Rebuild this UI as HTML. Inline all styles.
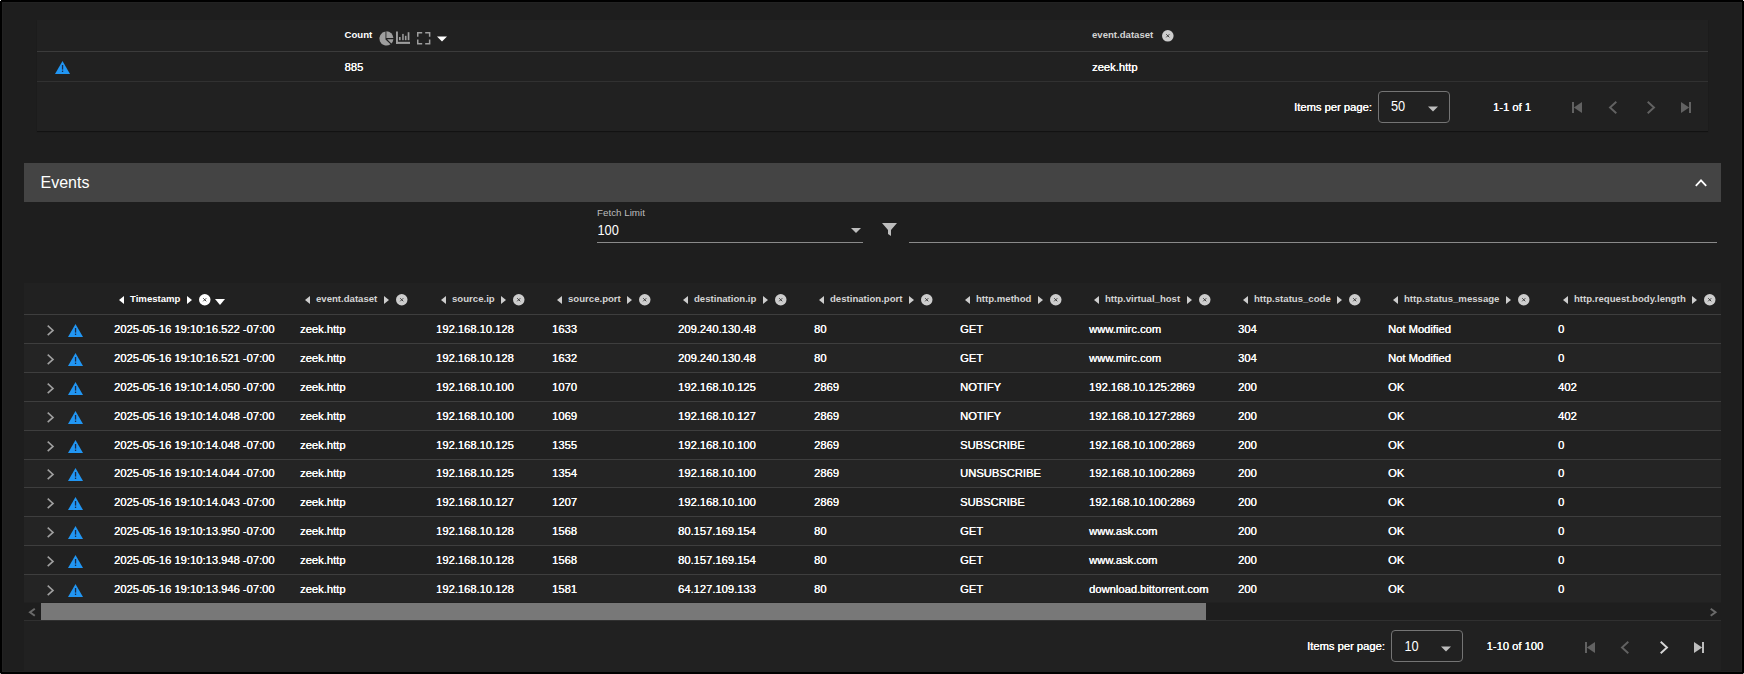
<!DOCTYPE html>
<html><head><meta charset="utf-8">
<style>
*{box-sizing:border-box}
html,body{margin:0;padding:0;background:#000;width:1744px;height:674px;overflow:hidden}
body{font-family:"Liberation Sans",sans-serif;color:#fff;position:relative}
.a{position:absolute;white-space:nowrap}
.th{position:absolute;font-size:9.6px;font-weight:bold;color:#d4d4d4;line-height:12px;white-space:nowrap}
.td{position:absolute;font-size:11.2px;color:#fff;line-height:14px;white-space:nowrap;text-shadow:0.3px 0 0 #fff}
svg{position:absolute;display:block;overflow:visible}
</style></head><body>

<div class="a" style="left:2px;top:2px;width:1740px;height:670px;background:#1e1e1e;border:1px solid #222222"></div>
<div class="a" style="left:37px;top:20px;width:1671px;height:111px;background:#212121;box-shadow:0 1px 1px rgba(0,0,0,.4)"></div>
<div class="a" style="left:37px;top:51px;width:1671px;height:1px;background:#3b3b3b"></div>
<div class="a" style="left:37px;top:81px;width:1671px;height:1px;background:#313131"></div>
<div class="th" style="left:344.5px;top:29px;color:#fff">Count</div>
<svg style="left:379px;top:30.5px" width="15" height="15" viewBox="0 0 15 15"><path d="M7.4 0.3A7 7 0 0 1 14.4 7.1H7.4Z" fill="#9e9e9e"/><path d="M6.5 0.6V8.5L11.5 13.2A7 7 0 1 1 6.5 0.6Z" fill="#9e9e9e"/><path d="M8.1 8.3H14.4A7 7 0 0 1 12.4 12.5Z" fill="#9e9e9e"/></svg>
<svg style="left:396px;top:32px" width="14" height="12" viewBox="0 0 14 12"><rect x="0" y="-0.5" width="1.9" height="12.4" fill="#9e9e9e"/><rect x="0" y="9.8" width="14" height="2.1" fill="#9e9e9e"/><rect x="3" y="5" width="1.6" height="3.2" fill="#9e9e9e"/><rect x="6.2" y="1.9" width="1.5" height="6.3" fill="#9e9e9e"/><rect x="8.9" y="3.8" width="1.6" height="4.4" fill="#9e9e9e"/><rect x="11.7" y="0.2" width="1.7" height="8" fill="#9e9e9e"/></svg>
<svg style="left:417.2px;top:31.5px" width="13.4" height="12.4" viewBox="0 0 13.4 12.4"><path d="M0 0H5.2V1.5H1.5V4.8H0ZM8.2 0H13.4V4.8H11.9V1.5H8.2ZM11.9 7.6H13.4V12.4H8.2V10.9H11.9ZM5.2 10.9V12.4H0V7.6H1.5V10.9Z" fill="#9e9e9e"/></svg>
<svg style="left:436.5px;top:36px" width="10" height="6" viewBox="0 0 10 5"><path d="M0 0H10L5 5Z" fill="#ffffff"/></svg>
<div class="th" style="left:1092px;top:28.7px">event.dataset</div>
<svg style="left:1161.7px;top:29.999999999999996px" width="11.6" height="11.6" viewBox="0 0 12 12"><circle cx="6" cy="6" r="6" fill="#cdcdcd"/><path d="M4.4 4.4L7.6 7.6M7.6 4.4L4.4 7.6" stroke="#3a3a3a" stroke-width="1"/></svg>
<svg style="left:55px;top:61px" width="15" height="13" viewBox="0 0 15 13"><path d="M7.5 0L15 13H0Z" fill="#2196f3"/><rect x="6.9" y="4" width="1.3" height="4.6" fill="#1a2a4a"/><rect x="6.9" y="9.6" width="1.3" height="1.4" fill="#1a2a4a"/></svg>
<div class="td" style="left:344.5px;top:60.1px">885</div>
<div class="td" style="left:1092px;top:60.1px">zeek.http</div>
<div class="td" style="left:1294px;top:99.6px">Items per page:</div>
<div class="a" style="left:1378px;top:91.3px;width:72px;height:31.3px;border:1px solid #747474;border-radius:4px"></div>
<div class="a" style="left:1391px;top:98px;font-size:12.8px;line-height:16px;transform:scaleY(1.08);transform-origin:0 0">50</div>
<svg style="left:1428px;top:106px" width="10" height="6" viewBox="0 0 10 5"><path d="M0 0H10L5 5Z" fill="#bdbdbd"/></svg>
<div class="td" style="left:1493px;top:99.6px">1-1 of 1</div>
<svg style="left:1572px;top:102px" width="10" height="11" viewBox="0 0 10 11"><rect x="0" y="0" width="2" height="11" fill="#626262"/><path d="M1.8 5.5L10 0V11Z" fill="#626262"/></svg>
<svg style="left:1608.5px;top:101px" width="8" height="13" viewBox="0 0 8 13"><path d="M7.3 0.7L1 6.5L7.3 12.3" fill="none" stroke="#626262" stroke-width="1.9"/></svg>
<svg style="left:1646.5px;top:101px" width="8" height="13" viewBox="0 0 8 13"><path d="M0.7 0.7L7 6.5L0.7 12.3" fill="none" stroke="#626262" stroke-width="1.9"/></svg>
<svg style="left:1681px;top:102px" width="10" height="11" viewBox="0 0 10 11"><rect x="8" y="0" width="2" height="11" fill="#626262"/><path d="M8.2 5.5L0 0V11Z" fill="#626262"/></svg>
<div class="a" style="left:24px;top:163px;width:1697px;height:38.8px;background:#444444"></div>
<div class="a" style="left:40.5px;top:172.5px;font-size:16px;line-height:20px;color:#fff">Events</div>
<svg style="left:1695px;top:179px" width="12" height="7.5" viewBox="0 0 12 7.5"><path d="M0.8 6.8L6 1.4L11.2 6.8" fill="none" stroke="#fff" stroke-width="1.8"/></svg>
<div class="a" style="left:597px;top:207.2px;font-size:9.8px;line-height:12px;color:#bdbdbd">Fetch Limit</div>
<div class="a" style="left:597.5px;top:221.6px;font-size:12.8px;line-height:16px;color:#fff;transform:scaleY(1.08);transform-origin:0 0">100</div>
<div class="a" style="left:597px;top:242px;width:266px;height:1px;background:#8a8a8a"></div>
<svg style="left:851px;top:228.2px" width="10" height="5.2" viewBox="0 0 10 5"><path d="M0 0H10L5 5Z" fill="#bdbdbd"/></svg>
<svg style="left:881.5px;top:223px" width="15" height="13" viewBox="0 0 15 13"><path d="M0 0H15L9 7V13L6 11V7Z" fill="#bdbdbd"/></svg>
<div class="a" style="left:909px;top:242px;width:808px;height:1px;background:#8a8a8a"></div>
<div class="a" style="left:24px;top:283px;width:1697px;height:389px;background:#212121"></div>
<div class="a" style="left:24px;top:314px;width:1697px;height:1px;background:#3e3e3e"></div>
<div class="a" style="left:118.5px;top:294.5px;height:10px;display:flex;align-items:center"><svg style="position:relative" width="5" height="8" viewBox="0 0 5 8"><path d="M5 0V8L0 4Z" fill="#ffffff"/></svg><span style="margin-left:6.5px;font-size:9.6px;font-weight:bold;color:#ffffff;line-height:10px;position:relative;top:-1px">Timestamp</span><svg style="position:relative;margin-left:6.6px" width="5" height="8" viewBox="0 0 5 8"><path d="M0 0V8L5 4Z" fill="#ffffff"/></svg><svg style="position:relative;margin-left:7px" width="11.5" height="11.5" viewBox="0 0 12 12"><circle cx="6" cy="6" r="6" fill="#ffffff"/><path d="M4.4 4.4L7.6 7.6M7.6 4.4L4.4 7.6" stroke="#3a3a3a" stroke-width="1"/></svg><svg style="position:relative;margin-left:4.5px;top:2.5px" width="10" height="6" viewBox="0 0 10 6"><path d="M0 0H10L5 6Z" fill="#fff"/></svg></div>
<div class="a" style="left:304.5px;top:294.5px;height:10px;display:flex;align-items:center"><svg style="position:relative" width="5" height="8" viewBox="0 0 5 8"><path d="M5 0V8L0 4Z" fill="#cdcdcd"/></svg><span style="margin-left:6.5px;font-size:9.6px;font-weight:bold;color:#d4d4d4;line-height:10px;position:relative;top:-1px">event.dataset</span><svg style="position:relative;margin-left:6.6px" width="5" height="8" viewBox="0 0 5 8"><path d="M0 0V8L5 4Z" fill="#cdcdcd"/></svg><svg style="position:relative;margin-left:7px" width="11.5" height="11.5" viewBox="0 0 12 12"><circle cx="6" cy="6" r="6" fill="#cdcdcd"/><path d="M4.4 4.4L7.6 7.6M7.6 4.4L4.4 7.6" stroke="#3a3a3a" stroke-width="1"/></svg></div>
<div class="a" style="left:440.5px;top:294.5px;height:10px;display:flex;align-items:center"><svg style="position:relative" width="5" height="8" viewBox="0 0 5 8"><path d="M5 0V8L0 4Z" fill="#cdcdcd"/></svg><span style="margin-left:6.5px;font-size:9.6px;font-weight:bold;color:#d4d4d4;line-height:10px;position:relative;top:-1px">source.ip</span><svg style="position:relative;margin-left:6.6px" width="5" height="8" viewBox="0 0 5 8"><path d="M0 0V8L5 4Z" fill="#cdcdcd"/></svg><svg style="position:relative;margin-left:7px" width="11.5" height="11.5" viewBox="0 0 12 12"><circle cx="6" cy="6" r="6" fill="#cdcdcd"/><path d="M4.4 4.4L7.6 7.6M7.6 4.4L4.4 7.6" stroke="#3a3a3a" stroke-width="1"/></svg></div>
<div class="a" style="left:556.5px;top:294.5px;height:10px;display:flex;align-items:center"><svg style="position:relative" width="5" height="8" viewBox="0 0 5 8"><path d="M5 0V8L0 4Z" fill="#cdcdcd"/></svg><span style="margin-left:6.5px;font-size:9.6px;font-weight:bold;color:#d4d4d4;line-height:10px;position:relative;top:-1px">source.port</span><svg style="position:relative;margin-left:6.6px" width="5" height="8" viewBox="0 0 5 8"><path d="M0 0V8L5 4Z" fill="#cdcdcd"/></svg><svg style="position:relative;margin-left:7px" width="11.5" height="11.5" viewBox="0 0 12 12"><circle cx="6" cy="6" r="6" fill="#cdcdcd"/><path d="M4.4 4.4L7.6 7.6M7.6 4.4L4.4 7.6" stroke="#3a3a3a" stroke-width="1"/></svg></div>
<div class="a" style="left:682.5px;top:294.5px;height:10px;display:flex;align-items:center"><svg style="position:relative" width="5" height="8" viewBox="0 0 5 8"><path d="M5 0V8L0 4Z" fill="#cdcdcd"/></svg><span style="margin-left:6.5px;font-size:9.6px;font-weight:bold;color:#d4d4d4;line-height:10px;position:relative;top:-1px">destination.ip</span><svg style="position:relative;margin-left:6.6px" width="5" height="8" viewBox="0 0 5 8"><path d="M0 0V8L5 4Z" fill="#cdcdcd"/></svg><svg style="position:relative;margin-left:7px" width="11.5" height="11.5" viewBox="0 0 12 12"><circle cx="6" cy="6" r="6" fill="#cdcdcd"/><path d="M4.4 4.4L7.6 7.6M7.6 4.4L4.4 7.6" stroke="#3a3a3a" stroke-width="1"/></svg></div>
<div class="a" style="left:818.5px;top:294.5px;height:10px;display:flex;align-items:center"><svg style="position:relative" width="5" height="8" viewBox="0 0 5 8"><path d="M5 0V8L0 4Z" fill="#cdcdcd"/></svg><span style="margin-left:6.5px;font-size:9.6px;font-weight:bold;color:#d4d4d4;line-height:10px;position:relative;top:-1px">destination.port</span><svg style="position:relative;margin-left:6.6px" width="5" height="8" viewBox="0 0 5 8"><path d="M0 0V8L5 4Z" fill="#cdcdcd"/></svg><svg style="position:relative;margin-left:7px" width="11.5" height="11.5" viewBox="0 0 12 12"><circle cx="6" cy="6" r="6" fill="#cdcdcd"/><path d="M4.4 4.4L7.6 7.6M7.6 4.4L4.4 7.6" stroke="#3a3a3a" stroke-width="1"/></svg></div>
<div class="a" style="left:964.5px;top:294.5px;height:10px;display:flex;align-items:center"><svg style="position:relative" width="5" height="8" viewBox="0 0 5 8"><path d="M5 0V8L0 4Z" fill="#cdcdcd"/></svg><span style="margin-left:6.5px;font-size:9.6px;font-weight:bold;color:#d4d4d4;line-height:10px;position:relative;top:-1px">http.method</span><svg style="position:relative;margin-left:6.6px" width="5" height="8" viewBox="0 0 5 8"><path d="M0 0V8L5 4Z" fill="#cdcdcd"/></svg><svg style="position:relative;margin-left:7px" width="11.5" height="11.5" viewBox="0 0 12 12"><circle cx="6" cy="6" r="6" fill="#cdcdcd"/><path d="M4.4 4.4L7.6 7.6M7.6 4.4L4.4 7.6" stroke="#3a3a3a" stroke-width="1"/></svg></div>
<div class="a" style="left:1093.5px;top:294.5px;height:10px;display:flex;align-items:center"><svg style="position:relative" width="5" height="8" viewBox="0 0 5 8"><path d="M5 0V8L0 4Z" fill="#cdcdcd"/></svg><span style="margin-left:6.5px;font-size:9.6px;font-weight:bold;color:#d4d4d4;line-height:10px;position:relative;top:-1px">http.virtual_host</span><svg style="position:relative;margin-left:6.6px" width="5" height="8" viewBox="0 0 5 8"><path d="M0 0V8L5 4Z" fill="#cdcdcd"/></svg><svg style="position:relative;margin-left:7px" width="11.5" height="11.5" viewBox="0 0 12 12"><circle cx="6" cy="6" r="6" fill="#cdcdcd"/><path d="M4.4 4.4L7.6 7.6M7.6 4.4L4.4 7.6" stroke="#3a3a3a" stroke-width="1"/></svg></div>
<div class="a" style="left:1242.5px;top:294.5px;height:10px;display:flex;align-items:center"><svg style="position:relative" width="5" height="8" viewBox="0 0 5 8"><path d="M5 0V8L0 4Z" fill="#cdcdcd"/></svg><span style="margin-left:6.5px;font-size:9.6px;font-weight:bold;color:#d4d4d4;line-height:10px;position:relative;top:-1px">http.status_code</span><svg style="position:relative;margin-left:6.6px" width="5" height="8" viewBox="0 0 5 8"><path d="M0 0V8L5 4Z" fill="#cdcdcd"/></svg><svg style="position:relative;margin-left:7px" width="11.5" height="11.5" viewBox="0 0 12 12"><circle cx="6" cy="6" r="6" fill="#cdcdcd"/><path d="M4.4 4.4L7.6 7.6M7.6 4.4L4.4 7.6" stroke="#3a3a3a" stroke-width="1"/></svg></div>
<div class="a" style="left:1392.5px;top:294.5px;height:10px;display:flex;align-items:center"><svg style="position:relative" width="5" height="8" viewBox="0 0 5 8"><path d="M5 0V8L0 4Z" fill="#cdcdcd"/></svg><span style="margin-left:6.5px;font-size:9.6px;font-weight:bold;color:#d4d4d4;line-height:10px;position:relative;top:-1px">http.status_message</span><svg style="position:relative;margin-left:6.6px" width="5" height="8" viewBox="0 0 5 8"><path d="M0 0V8L5 4Z" fill="#cdcdcd"/></svg><svg style="position:relative;margin-left:7px" width="11.5" height="11.5" viewBox="0 0 12 12"><circle cx="6" cy="6" r="6" fill="#cdcdcd"/><path d="M4.4 4.4L7.6 7.6M7.6 4.4L4.4 7.6" stroke="#3a3a3a" stroke-width="1"/></svg></div>
<div class="a" style="left:1562.5px;top:294.5px;height:10px;display:flex;align-items:center"><svg style="position:relative" width="5" height="8" viewBox="0 0 5 8"><path d="M5 0V8L0 4Z" fill="#cdcdcd"/></svg><span style="margin-left:6.5px;font-size:9.6px;font-weight:bold;color:#d4d4d4;line-height:10px;position:relative;top:-1px">http.request.body.length</span><svg style="position:relative;margin-left:6.6px" width="5" height="8" viewBox="0 0 5 8"><path d="M0 0V8L5 4Z" fill="#cdcdcd"/></svg><svg style="position:relative;margin-left:7px" width="11.5" height="11.5" viewBox="0 0 12 12"><circle cx="6" cy="6" r="6" fill="#cdcdcd"/><path d="M4.4 4.4L7.6 7.6M7.6 4.4L4.4 7.6" stroke="#3a3a3a" stroke-width="1"/></svg></div>
<div class="a" style="left:24px;top:343.3px;width:1697px;height:1px;background:#3e3e3e"></div>
<svg style="left:47px;top:325px" width="7" height="10.8" viewBox="0 0 7 10.8"><path d="M0.7 0.7L6 5.4L0.7 10.100000000000001" fill="none" stroke="#a0a0a0" stroke-width="1.6"/></svg>
<svg style="left:68px;top:324px" width="15" height="13" viewBox="0 0 15 13"><path d="M7.5 0L15 13H0Z" fill="#2196f3"/><rect x="6.9" y="4" width="1.3" height="4.6" fill="#1a2a4a"/><rect x="6.9" y="9.6" width="1.3" height="1.4" fill="#1a2a4a"/></svg>
<div class="td" style="left:114px;top:322.3px">2025-05-16 19:10:16.522 -07:00</div>
<div class="td" style="left:300px;top:322.3px">zeek.http</div>
<div class="td" style="left:436px;top:322.3px">192.168.10.128</div>
<div class="td" style="left:552px;top:322.3px">1633</div>
<div class="td" style="left:678px;top:322.3px">209.240.130.48</div>
<div class="td" style="left:814px;top:322.3px">80</div>
<div class="td" style="left:960px;top:322.3px">GET</div>
<div class="td" style="left:1089px;top:322.3px">www.mirc.com</div>
<div class="td" style="left:1238px;top:322.3px">304</div>
<div class="td" style="left:1388px;top:322.3px">Not Modified</div>
<div class="td" style="left:1558px;top:322.3px">0</div>
<div class="a" style="left:24px;top:344.3px;width:1697px;height:27.8px;background:#242424"></div>
<div class="a" style="left:24px;top:372.1px;width:1697px;height:1px;background:#3e3e3e"></div>
<svg style="left:47px;top:354px" width="7" height="10.8" viewBox="0 0 7 10.8"><path d="M0.7 0.7L6 5.4L0.7 10.100000000000001" fill="none" stroke="#a0a0a0" stroke-width="1.6"/></svg>
<svg style="left:68px;top:353px" width="15" height="13" viewBox="0 0 15 13"><path d="M7.5 0L15 13H0Z" fill="#2196f3"/><rect x="6.9" y="4" width="1.3" height="4.6" fill="#1a2a4a"/><rect x="6.9" y="9.6" width="1.3" height="1.4" fill="#1a2a4a"/></svg>
<div class="td" style="left:114px;top:351.1px">2025-05-16 19:10:16.521 -07:00</div>
<div class="td" style="left:300px;top:351.1px">zeek.http</div>
<div class="td" style="left:436px;top:351.1px">192.168.10.128</div>
<div class="td" style="left:552px;top:351.1px">1632</div>
<div class="td" style="left:678px;top:351.1px">209.240.130.48</div>
<div class="td" style="left:814px;top:351.1px">80</div>
<div class="td" style="left:960px;top:351.1px">GET</div>
<div class="td" style="left:1089px;top:351.1px">www.mirc.com</div>
<div class="td" style="left:1238px;top:351.1px">304</div>
<div class="td" style="left:1388px;top:351.1px">Not Modified</div>
<div class="td" style="left:1558px;top:351.1px">0</div>
<div class="a" style="left:24px;top:400.9px;width:1697px;height:1px;background:#3e3e3e"></div>
<svg style="left:47px;top:383px" width="7" height="10.8" viewBox="0 0 7 10.8"><path d="M0.7 0.7L6 5.4L0.7 10.100000000000001" fill="none" stroke="#a0a0a0" stroke-width="1.6"/></svg>
<svg style="left:68px;top:382px" width="15" height="13" viewBox="0 0 15 13"><path d="M7.5 0L15 13H0Z" fill="#2196f3"/><rect x="6.9" y="4" width="1.3" height="4.6" fill="#1a2a4a"/><rect x="6.9" y="9.6" width="1.3" height="1.4" fill="#1a2a4a"/></svg>
<div class="td" style="left:114px;top:379.9px">2025-05-16 19:10:14.050 -07:00</div>
<div class="td" style="left:300px;top:379.9px">zeek.http</div>
<div class="td" style="left:436px;top:379.9px">192.168.10.100</div>
<div class="td" style="left:552px;top:379.9px">1070</div>
<div class="td" style="left:678px;top:379.9px">192.168.10.125</div>
<div class="td" style="left:814px;top:379.9px">2869</div>
<div class="td" style="left:960px;top:379.9px">NOTIFY</div>
<div class="td" style="left:1089px;top:379.9px">192.168.10.125:2869</div>
<div class="td" style="left:1238px;top:379.9px">200</div>
<div class="td" style="left:1388px;top:379.9px">OK</div>
<div class="td" style="left:1558px;top:379.9px">402</div>
<div class="a" style="left:24px;top:401.9px;width:1697px;height:27.8px;background:#242424"></div>
<div class="a" style="left:24px;top:429.7px;width:1697px;height:1px;background:#3e3e3e"></div>
<svg style="left:47px;top:412px" width="7" height="10.8" viewBox="0 0 7 10.8"><path d="M0.7 0.7L6 5.4L0.7 10.100000000000001" fill="none" stroke="#a0a0a0" stroke-width="1.6"/></svg>
<svg style="left:68px;top:411px" width="15" height="13" viewBox="0 0 15 13"><path d="M7.5 0L15 13H0Z" fill="#2196f3"/><rect x="6.9" y="4" width="1.3" height="4.6" fill="#1a2a4a"/><rect x="6.9" y="9.6" width="1.3" height="1.4" fill="#1a2a4a"/></svg>
<div class="td" style="left:114px;top:408.7px">2025-05-16 19:10:14.048 -07:00</div>
<div class="td" style="left:300px;top:408.7px">zeek.http</div>
<div class="td" style="left:436px;top:408.7px">192.168.10.100</div>
<div class="td" style="left:552px;top:408.7px">1069</div>
<div class="td" style="left:678px;top:408.7px">192.168.10.127</div>
<div class="td" style="left:814px;top:408.7px">2869</div>
<div class="td" style="left:960px;top:408.7px">NOTIFY</div>
<div class="td" style="left:1089px;top:408.7px">192.168.10.127:2869</div>
<div class="td" style="left:1238px;top:408.7px">200</div>
<div class="td" style="left:1388px;top:408.7px">OK</div>
<div class="td" style="left:1558px;top:408.7px">402</div>
<div class="a" style="left:24px;top:458.5px;width:1697px;height:1px;background:#3e3e3e"></div>
<svg style="left:47px;top:441px" width="7" height="10.8" viewBox="0 0 7 10.8"><path d="M0.7 0.7L6 5.4L0.7 10.100000000000001" fill="none" stroke="#a0a0a0" stroke-width="1.6"/></svg>
<svg style="left:68px;top:440px" width="15" height="13" viewBox="0 0 15 13"><path d="M7.5 0L15 13H0Z" fill="#2196f3"/><rect x="6.9" y="4" width="1.3" height="4.6" fill="#1a2a4a"/><rect x="6.9" y="9.6" width="1.3" height="1.4" fill="#1a2a4a"/></svg>
<div class="td" style="left:114px;top:437.5px">2025-05-16 19:10:14.048 -07:00</div>
<div class="td" style="left:300px;top:437.5px">zeek.http</div>
<div class="td" style="left:436px;top:437.5px">192.168.10.125</div>
<div class="td" style="left:552px;top:437.5px">1355</div>
<div class="td" style="left:678px;top:437.5px">192.168.10.100</div>
<div class="td" style="left:814px;top:437.5px">2869</div>
<div class="td" style="left:960px;top:437.5px">SUBSCRIBE</div>
<div class="td" style="left:1089px;top:437.5px">192.168.10.100:2869</div>
<div class="td" style="left:1238px;top:437.5px">200</div>
<div class="td" style="left:1388px;top:437.5px">OK</div>
<div class="td" style="left:1558px;top:437.5px">0</div>
<div class="a" style="left:24px;top:459.5px;width:1697px;height:27.8px;background:#242424"></div>
<div class="a" style="left:24px;top:487.3px;width:1697px;height:1px;background:#3e3e3e"></div>
<svg style="left:47px;top:469px" width="7" height="10.8" viewBox="0 0 7 10.8"><path d="M0.7 0.7L6 5.4L0.7 10.100000000000001" fill="none" stroke="#a0a0a0" stroke-width="1.6"/></svg>
<svg style="left:68px;top:468px" width="15" height="13" viewBox="0 0 15 13"><path d="M7.5 0L15 13H0Z" fill="#2196f3"/><rect x="6.9" y="4" width="1.3" height="4.6" fill="#1a2a4a"/><rect x="6.9" y="9.6" width="1.3" height="1.4" fill="#1a2a4a"/></svg>
<div class="td" style="left:114px;top:466.3px">2025-05-16 19:10:14.044 -07:00</div>
<div class="td" style="left:300px;top:466.3px">zeek.http</div>
<div class="td" style="left:436px;top:466.3px">192.168.10.125</div>
<div class="td" style="left:552px;top:466.3px">1354</div>
<div class="td" style="left:678px;top:466.3px">192.168.10.100</div>
<div class="td" style="left:814px;top:466.3px">2869</div>
<div class="td" style="left:960px;top:466.3px">UNSUBSCRIBE</div>
<div class="td" style="left:1089px;top:466.3px">192.168.10.100:2869</div>
<div class="td" style="left:1238px;top:466.3px">200</div>
<div class="td" style="left:1388px;top:466.3px">OK</div>
<div class="td" style="left:1558px;top:466.3px">0</div>
<div class="a" style="left:24px;top:516.1px;width:1697px;height:1px;background:#3e3e3e"></div>
<svg style="left:47px;top:498px" width="7" height="10.8" viewBox="0 0 7 10.8"><path d="M0.7 0.7L6 5.4L0.7 10.100000000000001" fill="none" stroke="#a0a0a0" stroke-width="1.6"/></svg>
<svg style="left:68px;top:497px" width="15" height="13" viewBox="0 0 15 13"><path d="M7.5 0L15 13H0Z" fill="#2196f3"/><rect x="6.9" y="4" width="1.3" height="4.6" fill="#1a2a4a"/><rect x="6.9" y="9.6" width="1.3" height="1.4" fill="#1a2a4a"/></svg>
<div class="td" style="left:114px;top:495.1px">2025-05-16 19:10:14.043 -07:00</div>
<div class="td" style="left:300px;top:495.1px">zeek.http</div>
<div class="td" style="left:436px;top:495.1px">192.168.10.127</div>
<div class="td" style="left:552px;top:495.1px">1207</div>
<div class="td" style="left:678px;top:495.1px">192.168.10.100</div>
<div class="td" style="left:814px;top:495.1px">2869</div>
<div class="td" style="left:960px;top:495.1px">SUBSCRIBE</div>
<div class="td" style="left:1089px;top:495.1px">192.168.10.100:2869</div>
<div class="td" style="left:1238px;top:495.1px">200</div>
<div class="td" style="left:1388px;top:495.1px">OK</div>
<div class="td" style="left:1558px;top:495.1px">0</div>
<div class="a" style="left:24px;top:517.1px;width:1697px;height:27.8px;background:#242424"></div>
<div class="a" style="left:24px;top:544.9px;width:1697px;height:1px;background:#3e3e3e"></div>
<svg style="left:47px;top:527px" width="7" height="10.8" viewBox="0 0 7 10.8"><path d="M0.7 0.7L6 5.4L0.7 10.100000000000001" fill="none" stroke="#a0a0a0" stroke-width="1.6"/></svg>
<svg style="left:68px;top:526px" width="15" height="13" viewBox="0 0 15 13"><path d="M7.5 0L15 13H0Z" fill="#2196f3"/><rect x="6.9" y="4" width="1.3" height="4.6" fill="#1a2a4a"/><rect x="6.9" y="9.6" width="1.3" height="1.4" fill="#1a2a4a"/></svg>
<div class="td" style="left:114px;top:523.9px">2025-05-16 19:10:13.950 -07:00</div>
<div class="td" style="left:300px;top:523.9px">zeek.http</div>
<div class="td" style="left:436px;top:523.9px">192.168.10.128</div>
<div class="td" style="left:552px;top:523.9px">1568</div>
<div class="td" style="left:678px;top:523.9px">80.157.169.154</div>
<div class="td" style="left:814px;top:523.9px">80</div>
<div class="td" style="left:960px;top:523.9px">GET</div>
<div class="td" style="left:1089px;top:523.9px">www.ask.com</div>
<div class="td" style="left:1238px;top:523.9px">200</div>
<div class="td" style="left:1388px;top:523.9px">OK</div>
<div class="td" style="left:1558px;top:523.9px">0</div>
<div class="a" style="left:24px;top:573.7px;width:1697px;height:1px;background:#3e3e3e"></div>
<svg style="left:47px;top:556px" width="7" height="10.8" viewBox="0 0 7 10.8"><path d="M0.7 0.7L6 5.4L0.7 10.100000000000001" fill="none" stroke="#a0a0a0" stroke-width="1.6"/></svg>
<svg style="left:68px;top:555px" width="15" height="13" viewBox="0 0 15 13"><path d="M7.5 0L15 13H0Z" fill="#2196f3"/><rect x="6.9" y="4" width="1.3" height="4.6" fill="#1a2a4a"/><rect x="6.9" y="9.6" width="1.3" height="1.4" fill="#1a2a4a"/></svg>
<div class="td" style="left:114px;top:552.7px">2025-05-16 19:10:13.948 -07:00</div>
<div class="td" style="left:300px;top:552.7px">zeek.http</div>
<div class="td" style="left:436px;top:552.7px">192.168.10.128</div>
<div class="td" style="left:552px;top:552.7px">1568</div>
<div class="td" style="left:678px;top:552.7px">80.157.169.154</div>
<div class="td" style="left:814px;top:552.7px">80</div>
<div class="td" style="left:960px;top:552.7px">GET</div>
<div class="td" style="left:1089px;top:552.7px">www.ask.com</div>
<div class="td" style="left:1238px;top:552.7px">200</div>
<div class="td" style="left:1388px;top:552.7px">OK</div>
<div class="td" style="left:1558px;top:552.7px">0</div>
<div class="a" style="left:24px;top:574.7px;width:1697px;height:27.8px;background:#242424"></div>
<div class="a" style="left:24px;top:602.5px;width:1697px;height:1px;background:#3e3e3e"></div>
<svg style="left:47px;top:585px" width="7" height="10.8" viewBox="0 0 7 10.8"><path d="M0.7 0.7L6 5.4L0.7 10.100000000000001" fill="none" stroke="#a0a0a0" stroke-width="1.6"/></svg>
<svg style="left:68px;top:584px" width="15" height="13" viewBox="0 0 15 13"><path d="M7.5 0L15 13H0Z" fill="#2196f3"/><rect x="6.9" y="4" width="1.3" height="4.6" fill="#1a2a4a"/><rect x="6.9" y="9.6" width="1.3" height="1.4" fill="#1a2a4a"/></svg>
<div class="td" style="left:114px;top:581.5px">2025-05-16 19:10:13.946 -07:00</div>
<div class="td" style="left:300px;top:581.5px">zeek.http</div>
<div class="td" style="left:436px;top:581.5px">192.168.10.128</div>
<div class="td" style="left:552px;top:581.5px">1581</div>
<div class="td" style="left:678px;top:581.5px">64.127.109.133</div>
<div class="td" style="left:814px;top:581.5px">80</div>
<div class="td" style="left:960px;top:581.5px">GET</div>
<div class="td" style="left:1089px;top:581.5px">download.bittorrent.com</div>
<div class="td" style="left:1238px;top:581.5px">200</div>
<div class="td" style="left:1388px;top:581.5px">OK</div>
<div class="td" style="left:1558px;top:581.5px">0</div>
<div class="a" style="left:24px;top:603px;width:1697px;height:17px;background:#1e1e1e"></div>
<div class="a" style="left:41px;top:603px;width:1165px;height:17px;background:#787878"></div>
<svg style="left:28.5px;top:607.5px" width="6.5" height="8.5" viewBox="0 0 6.5 8.5"><path d="M5.8 0.7L1 4.25L5.8 7.8" fill="none" stroke="#6a6a6a" stroke-width="2"/></svg>
<svg style="left:1709.5px;top:607.5px" width="6.5" height="8.5" viewBox="0 0 6.5 8.5"><path d="M0.7 0.7L5.5 4.25L0.7 7.8" fill="none" stroke="#6a6a6a" stroke-width="2"/></svg>
<div class="a" style="left:24px;top:620px;width:1697px;height:1px;background:#303030"></div>
<div class="td" style="left:1307px;top:639.2px">Items per page:</div>
<div class="a" style="left:1391px;top:630.2px;width:72px;height:31.6px;border:1px solid #747474;border-radius:4px"></div>
<div class="a" style="left:1404.5px;top:638px;font-size:12.8px;line-height:16px;transform:scaleY(1.08);transform-origin:0 0">10</div>
<svg style="left:1441px;top:646px" width="10" height="6" viewBox="0 0 10 5"><path d="M0 0H10L5 5Z" fill="#bdbdbd"/></svg>
<div class="td" style="left:1486.5px;top:639.2px">1-10 of 100</div>
<svg style="left:1585px;top:642px" width="10" height="11" viewBox="0 0 10 11"><rect x="0" y="0" width="2" height="11" fill="#626262"/><path d="M1.8 5.5L10 0V11Z" fill="#626262"/></svg>
<svg style="left:1621px;top:641px" width="8" height="13" viewBox="0 0 8 13"><path d="M7.3 0.7L1 6.5L7.3 12.3" fill="none" stroke="#626262" stroke-width="1.9"/></svg>
<svg style="left:1659.5px;top:641px" width="8" height="13" viewBox="0 0 8 13"><path d="M0.7 0.7L7 6.5L0.7 12.3" fill="none" stroke="#d6d6d6" stroke-width="1.9"/></svg>
<svg style="left:1694px;top:642px" width="10" height="11" viewBox="0 0 10 11"><rect x="8" y="0" width="2" height="11" fill="#bdbdbd"/><path d="M8.2 5.5L0 0V11Z" fill="#bdbdbd"/></svg>
<div class="a" style="left:0;top:0;width:1px;height:1px;background:#e6e6e6"></div>
<div class="a" style="left:1743px;top:0;width:1px;height:1px;background:#d8d8d8"></div>
<div class="a" style="left:1743px;top:673px;width:1px;height:1px;background:#9a9a9a"></div>
<div class="a" style="left:0;top:673px;width:1px;height:1px;background:#9a9a9a"></div>
</body></html>
